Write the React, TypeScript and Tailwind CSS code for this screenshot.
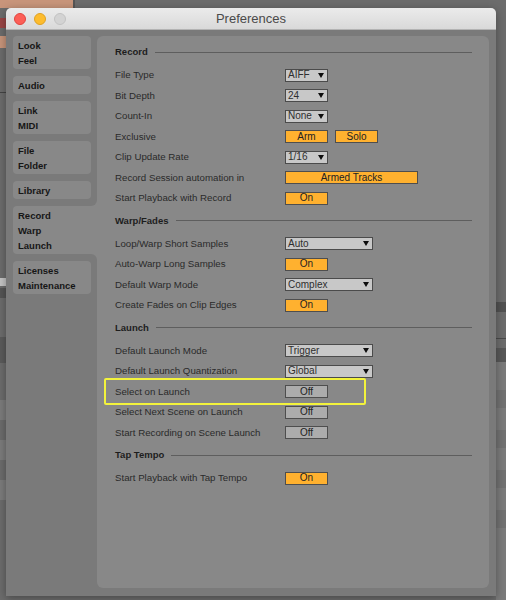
import type { ReactNode } from 'react';

const TABS = [
  { lines: ['Look', 'Feel'] },
  { lines: ['Audio'] },
  { lines: ['Link', 'MIDI'] },
  { lines: ['File', 'Folder'] },
  { lines: ['Library'] },
  { lines: ['Record', 'Warp', 'Launch'], active: true },
  { lines: ['Licenses', 'Maintenance'] },
];

function cn(...classes: (string | boolean | undefined)[]) {
  return classes.filter(Boolean).join(' ');
}

function Heading({ title }: { title: string }) {
  return (
    <div className="mt-[1px] mb-[2px] flex h-[22px] items-center gap-[7px]">
      <span className="text-[9.5px] font-bold leading-none text-[#1d1d1d]">{title}</span>
      <div className="h-px flex-1 bg-[#5e5e5e]" />
    </div>
  );
}

function Row({ label, children, highlight }: { label: string; children: ReactNode; highlight?: boolean }) {
  return (
    <div className="relative flex h-[20.5px] items-center">
      <div className="w-[170px] shrink-0 text-[9.7px] leading-none text-[#2a2a2a]">{label}</div>
      <div className="flex items-center gap-[7px]">{children}</div>
      {highlight && (
        <div className="absolute -left-[11px] -top-[3.5px] h-[27px] w-[262px] rounded-[2px] border-2 border-[#f3f33c]" />
      )}
    </div>
  );
}

function Dropdown({ value, wide }: { value: string; wide?: boolean }) {
  return (
    <div
      className={cn(
        'flex h-[13px] items-center justify-between border border-[#4b4b4b] bg-[#c8c8c8] pl-[2px] pr-[3px] text-[10px] leading-none text-[#2e2e2e]',
        wide ? 'w-[88px]' : 'w-[43px]'
      )}
    >
      <span>{value}</span>
      <svg width="6" height="5" viewBox="0 0 6 5">
        <path d="M0 0h6L3 5z" fill="#0d0d0d" />
      </svg>
    </div>
  );
}

function Button({ label, on, long }: { label: string; on?: boolean; long?: boolean }) {
  return (
    <div
      className={cn(
        'flex h-[13px] items-center justify-center border border-[#4e4e4e] text-[10px] leading-none text-[#222]',
        on ? 'bg-[#ffb12f]' : 'bg-[#acacac]',
        long ? 'w-[133px]' : 'w-[43px]'
      )}
    >
      {label}
    </div>
  );
}

function Sidebar() {
  return (
    <div className="flex w-[84px] shrink-0 flex-col gap-[7px]">
      {TABS.map(tab => (
        <div
          key={tab.lines[0]}
          className={cn(
            'relative py-[1.5px] pl-[5px] text-[9.5px] font-bold leading-[15px] text-[#161616]',
            tab.active ? 'w-[84px] rounded-l-[4px] bg-[#888888]' : 'w-[78px] rounded-[4px] bg-[#888888]'
          )}
        >
          {tab.lines.map(l => (
            <div key={l}>{l}</div>
          ))}
          {tab.active && (
            <>
              <div className="absolute -top-[6px] right-0 h-[6px] w-[6px] bg-[#888888]">
                <div className="h-full w-full rounded-br-[6px] bg-[#7a7a7a]" />
              </div>
              <div className="absolute -bottom-[6px] right-0 h-[6px] w-[6px] bg-[#888888]">
                <div className="h-full w-full rounded-tr-[6px] bg-[#7a7a7a]" />
              </div>
            </>
          )}
        </div>
      ))}
    </div>
  );
}

function Desktop() {
  return (
    <>
      <div className="absolute left-0 top-0 h-[8px] w-[73px] bg-[#c8957b]" />
      <div className="absolute left-[73px] top-0 h-[8px] w-[2px] bg-[#555]" />
      <div className="absolute left-0 top-[18px] h-[10px] w-[6px] bg-[#9a4545]" />
      <div className="absolute left-0 top-[36px] h-[12px] w-[6px] bg-[#c8957b]" />
      <div className="absolute left-0 top-[92px] h-px w-[6px] bg-[#444]" />
      <div className="absolute left-0 top-[278px] h-[8px] w-[6px] bg-[#c4c4c4]" />
      <div className="absolute left-0 top-[288px] h-[10px] w-[6px] bg-[#555]" />
      <div className="absolute left-0 top-[337px] h-[26px] w-[6px] bg-[#5b5b5b]" />
      <div className="absolute left-0 top-[400px] h-[20px] w-[6px] bg-[#7c7c7c]" />
      <div className="absolute left-0 top-[440px] h-[20px] w-[6px] bg-[#7c7c7c]" />
      <div className="absolute left-0 top-[480px] h-[20px] w-[6px] bg-[#7c7c7c]" />
      <div className="absolute right-0 top-[302px] h-[10px] w-[10px] bg-[#525252]" />
      <div className="absolute right-0 top-[338px] h-px w-[10px] bg-[#4a4a4a]" />
      <div className="absolute right-0 top-[348px] h-[14px] w-[10px] bg-[#585858]" />
      <div className="absolute right-0 top-[362px] h-[238px] w-[10px] bg-[#7b7b7b]" />
      <div className="absolute right-0 top-[390px] h-[18px] w-[10px] bg-[#727272]" />
      <div className="absolute right-0 top-[430px] h-[18px] w-[10px] bg-[#727272]" />
      <div className="absolute right-0 top-[470px] h-[18px] w-[10px] bg-[#727272]" />
      <div className="absolute right-0 top-[510px] h-[18px] w-[10px] bg-[#727272]" />
    </>
  );
}

export default function App() {
  return (
    <div className="relative h-[600px] w-[506px] overflow-hidden bg-[#6c6c6c] font-['Liberation_Sans',Arial,sans-serif]">
      <Desktop />
      <div className="absolute left-[6px] top-[8px] flex h-[588px] w-[490px] flex-col overflow-hidden rounded-t-[5px] shadow-[0_2px_8px_rgba(0,0,0,0.35)]">
        <div className="relative flex h-[22px] shrink-0 items-center border-b border-[#b3b3b3] bg-gradient-to-b from-[#ebebeb] to-[#d9d9d9]">
          <div className="absolute left-[7.5px] top-[4.5px] flex gap-[8px]">
            <div className="h-[12px] w-[12px] rounded-full bg-[#fc5f57] border border-[#e0443e]" />
            <div className="h-[12px] w-[12px] rounded-full bg-[#fdbc2e] border border-[#dea123]" />
            <div className="h-[12px] w-[12px] rounded-full bg-[#d3d3d3] border border-[#c2c2c2]" />
          </div>
          <div className="w-full text-center text-[13px] leading-none text-[#4a4a4a]">Preferences</div>
        </div>

        <div className="flex flex-1 bg-[#7a7a7a] pl-[7px] pr-[7px] pt-[6px] pb-[8px]">
          <Sidebar />
          <div className="flex-1 rounded-[6px] bg-[#888888] pl-[18px] pr-[17px] pt-[4px]">
            <Heading title="Record" />
            <Row label="File Type"><Dropdown value="AIFF" /></Row>
            <Row label="Bit Depth"><Dropdown value="24" /></Row>
            <Row label="Count-In"><Dropdown value="None" /></Row>
            <Row label="Exclusive">
              <Button label="Arm" on />
              <Button label="Solo" on />
            </Row>
            <Row label="Clip Update Rate"><Dropdown value="1/16" /></Row>
            <Row label="Record Session automation in"><Button label="Armed Tracks" on long /></Row>
            <Row label="Start Playback with Record"><Button label="On" on /></Row>

            <Heading title="Warp/Fades" />
            <Row label="Loop/Warp Short Samples"><Dropdown value="Auto" wide /></Row>
            <Row label="Auto-Warp Long Samples"><Button label="On" on /></Row>
            <Row label="Default Warp Mode"><Dropdown value="Complex" wide /></Row>
            <Row label="Create Fades on Clip Edges"><Button label="On" on /></Row>

            <Heading title="Launch" />
            <Row label="Default Launch Mode"><Dropdown value="Trigger" wide /></Row>
            <Row label="Default Launch Quantization"><Dropdown value="Global" wide /></Row>
            <Row label="Select on Launch" highlight><Button label="Off" /></Row>
            <Row label="Select Next Scene on Launch"><Button label="Off" /></Row>
            <Row label="Start Recording on Scene Launch"><Button label="Off" /></Row>

            <Heading title="Tap Tempo" />
            <Row label="Start Playback with Tap Tempo"><Button label="On" on /></Row>
          </div>
        </div>
      </div>
    </div>
  );
}
